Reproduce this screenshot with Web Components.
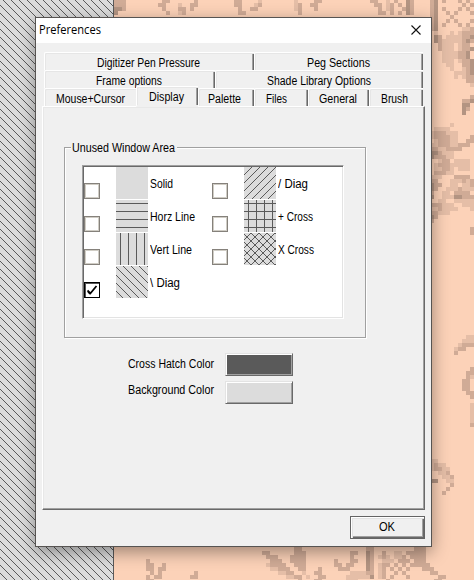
<!DOCTYPE html>
<html lang="en"><head><meta charset="utf-8"><title>Preferences</title>
<style>html,body{margin:0;width:474px;height:580px;overflow:hidden;background:#fcd2b8}body{font:12px/14px "Liberation Sans",Arial,sans-serif;color:#000}</style></head>
<body>
<paint-desktop>
<pref-window heading="Preferences">
<tab-stack>
<tab-row slot="tabs">
<tab-item style="width:210px" label="Digitizer Pen Pressure" w="103" lx="52"></tab-item><tab-item style="width:169px" label="Peg Sections" w="63" lx="52"></tab-item>
</tab-row>
<tab-row slot="tabs">
<tab-item style="width:171px" label="Frame options" w="66" lx="51"></tab-item><tab-item style="width:208px" label="Shade Library Options" w="104" lx="51"></tab-item>
</tab-row>
<tab-row slot="tabs">
<tab-item flat style="width:92px" label="Mouse+Cursor" w="69" lx="11"></tab-item><tab-item selected style="width:62px" label="Display" w="35" lx="12"></tab-item><tab-item style="width:56px" label="Palette" w="33" lx="9"></tab-item><tab-item style="width:54px" label="Files" w="21" lx="11"></tab-item><tab-item style="width:61px" label="General" w="38" lx="10"></tab-item><tab-item style="width:54px" label="Brush" w="27" lx="11"></tab-item>
</tab-row>
<group-box label="Unused Window Area" w="103">
<pattern-list>
<pattern-option kind="solid" label="Solid" w="23"></pattern-option>
<pattern-option kind="horz" label="Horz Line" w="45"></pattern-option>
<pattern-option kind="vert" label="Vert Line" w="42"></pattern-option>
<pattern-option kind="back" label="\ Diag" w="30" checked></pattern-option>
<pattern-option kind="slash" label="/ Diag" w="30"></pattern-option>
<pattern-option kind="plus" label="+ Cross" w="35"></pattern-option>
<pattern-option kind="cross" label="X Cross" w="36"></pattern-option>
</pattern-list>
</group-box>
<color-row first label="Cross Hatch Color" w="86" color="#5a5a5a"></color-row>
<color-row label="Background Color" w="86" color="#dcdcdc"></color-row>
</tab-stack>
<ok-button slot="footer"></ok-button>
</pref-window>
</paint-desktop>
<script>
const make=(name,html,init)=>customElements.define(name,class extends HTMLElement{
 connectedCallback(){ if(this.shadowRoot)return; const r=this.attachShadow({mode:'open'}); r.innerHTML=typeof html==='function'?html(this):html; if(init)init(this,r); }
});
const at=(e,n)=>e.getAttribute(n);
const fit=(e)=>`<fit-text text="${at(e,'label')}" w="${at(e,'w')}"></fit-text>`;

/* Single-line label squeezed to a set width */
make('fit-text',e=>`<style>:host{display:block;flex:none;height:14px;width:${at(e,'w')}px;white-space:nowrap}span{display:inline-block;transform-origin:0 0}</style><span>${at(e,'text')}</span>`,
 (e,r)=>{const s=r.querySelector('span');s.style.transform=`scaleX(${+at(e,'w')/s.getBoundingClientRect().width})`;});

/* 8x8 hatch tiles; p is the diagonal phase */
function tile(kind,p=7){
 let d='';
 for(let i=0;i<8;i++){
  if(kind==='horz'||kind==='plus')d+=`M${i} 3h1v1h-1z`;
  if(kind==='vert'||kind==='plus')d+=`M4 ${i}h1v1h-1z`;
  if(kind==='back'||kind==='cross')d+=`M${(i+p)%8} ${i}h1v1h-1z`;
  if(kind==='slash'||kind==='cross')d+=`M${(15-i+(kind==='cross'?-1:0))%8} ${i}h1v1h-1z`;
 }
 return `<svg width="100%" height="100%" shape-rendering="crispEdges"><defs><pattern id="t" width="8" height="8" patternUnits="userSpaceOnUse"><path fill="#5a5a5a" d="${d}"/></pattern></defs><rect width="100%" height="100%" fill="#dcdcdc"/><rect width="100%" height="100%" fill="url(#t)"/></svg>`;
}
make('hatch-fill',e=>`<style>:host{display:block;flex:none}svg{display:block}</style>${tile(at(e,'kind'),+(at(e,'phase')??7))}`);

/* Enlarged drawing: each character is one 4px pixel, a = light … d = darkest */
const art=[
[114,-1,["bbb","bbb","ccb","c"]],
[150,-1,["   bb      b","  bb   a  bb","   b   bb b","    b  ab"]],
[226,-1,["  bb    a","  bb   ab","   b  bb","   bb"]],
[294,-1,["a    bb","ab  bb","ab   b"," b"]],
[370,-1,["bb  a b  cb"," bb ab b cb","  b ab  bcb","  bb b b cb"]],
[426,-1,[
" bc b   b b "," bc      b b"," bc b   b b "," bc  b b   b"," bc   b     "," bc  b b   b"," bc b   b b ",
" bc      aab","  a   a abbb","  cb aaaabbc","  cbaaaaabcb","   baaa abb ","   baaa abbc","    aaaabbc ","    aaaabbc ","    aaa abbc","     aa  bbc","      a  abc","       aaabc","       a abb","          bb","           a",
"            ","            ","           b","         bbc","         cc ","         cb ","         c  ","            ","            ",
"      a     ","  aaaa      "," abbbaaa    "," abbbbaa   b","  abbbaa  bb"," aabbbaabbb "," bbaabbbb   "," ccbaaa     "," cbbbaa     ","   abb aaaa ","  abbbaaaaa ","  aabba aaa ","  bbbaa     "," aaa   bbbb "," bb   aaabab"," cbb  aa aab"," cb  aaabaaa"," b  aa bbbb "," c  aaaccbbb","   aa  aaaaa"," bbbaaa  aaa"," aabaaaa   a"," bbaaa      "," cb         "," b          ","            ","           b","           b"]],
[426,335,["          aa","         aaa","        abbb","       abb  ","       b    "]],
[426,367,["           b","          bb","          ba","         bb ","         bb ","         bb ","          bb","           b"]],
[458,403,["   a","   a","   a","   a","   a","   b"]],
[426,459,[" aa"," abaa"," abbaa","   aab","    aab"," cc  aa","      b","     b","    b"]],
[114,547,[
"                                             bb                bb          bbb",
"                                     bb      bbb           bb  cb  b  aa bbbbb",
"                                      bbb   bbbb           b   cb aba aab bbbb",
"        b                              bbb  bbbb       b   bb  cb  aaa bbb bbb",
"        bb  b                         abbbb  bbb       bb bb   cb abb b b bbbbb",
"        bb bb                          aabbb  bb   b    bbb    cb ab b b b   bbb",
"         b b        b                    aabb  a  bb       aaaabb ab  b b      bb",
"        b bb       bb                      aabb a  bb     aaaaaac ab b   b       bb",
"        bb                                    b   bb      aaa       b           bb"]]
];
const tone={a:'#e5bea7',b:'#d0ab96',c:'#b39482',d:'#8d766a'};
make('pixel-art',()=>{let o='';for(const[x,y,rows]of art)rows.forEach((s,j)=>[...s].forEach((c,i)=>{if(tone[c])o+=`<rect x="${x+i*4}" y="${y+j*4}" width="4" height="4" fill="${tone[c]}"/>`}));
 return `<style>:host{display:block}svg{display:block}</style><svg width="474" height="580" shape-rendering="crispEdges">${o}</svg>`;});

make('paint-desktop',`<style>:host{display:block;position:relative;width:474px;height:580px;overflow:hidden;background:#fcd2b8}
pixel-art{position:absolute;inset:0}hatch-fill{position:relative;width:113px;height:580px;border-right:1px solid #5a5a5a}</style><pixel-art></pixel-art><hatch-fill kind="back" phase="3"></hatch-fill><slot></slot>`);

make('pref-window',e=>`<style>:host{position:absolute;left:35px;top:17px;width:397px;height:530px;box-sizing:border-box;border:1px solid #575452;background:#f0f0f0;display:flex;flex-direction:column;box-shadow:0 5px 16px rgba(0,0,0,.38)}
header{height:25px;box-sizing:border-box;background:#fff;display:flex;align-items:center;justify-content:space-between;padding:0 9px 2px 3px;font:12px/14px "Open Sans","Noto Sans",sans-serif}
header svg{display:block}
footer{display:flex;justify-content:flex-end;padding:6px 6px 0 0}</style>
<header><fit-text text="${at(e,'heading')}" w="62"></fit-text><svg width="12" height="12"><path d="M1.5 1.5l9 9M10.5 1.5l-9 9" stroke="#111" stroke-width="1.1"/></svg></header><slot></slot><footer><slot name="footer"></slot></footer>`);

make('tab-stack',`<style>:host{display:block;padding:9px 6px 0}nav{padding-left:2px}
section{height:404px;box-sizing:border-box;border:1px solid;border-color:#fff #696969 #696969 #fff;box-shadow:inset -1px -1px #a0a0a0,inset 1px 1px #e8e8e8;padding:40px 0 0 21px;width:383px}</style><nav><slot name="tabs"></slot></nav><section><slot></slot></section>`);
make('tab-row',`<style>:host{display:flex;height:18px}</style><slot></slot>`);
make('tab-item',e=>`<style>:host{display:block;box-sizing:border-box;height:18px;padding:3px 0 0 ${at(e,'lx')}px;background:#f0f0f0;border-left:1px solid #fff;border-top:1px solid #fff;border-top-left-radius:2px;box-shadow:inset 1px 1px #e6e6e6,inset -1px 0 #696969,inset -2px 0 #a0a0a0}
:host([flat]){box-shadow:inset 1px 1px #e6e6e6}
:host([selected]){height:21px;margin-top:-2px;position:relative;border-bottom:2px solid #f0f0f0}</style>${fit(e)}`);

make('group-box',e=>`<style>:host{display:block;box-sizing:border-box;width:302px;height:191px;border:1px solid #a0a0a0;box-shadow:inset 1px 1px #fff,1px 1px #fff;padding:17px}
.l{position:absolute;left:35px;top:123px;padding:0 2px 0 1px;background:#f0f0f0}</style><div class="l">${fit(e)}</div><slot></slot>`);
make('pattern-list',`<style>:host{display:grid;box-sizing:border-box;width:262px;height:154px;background:#fff;border:1px solid;border-color:#a0a0a0 #fff #fff #a0a0a0;box-shadow:inset 1px 1px #696969,inset -1px -1px #e3e3e3;padding:1px;grid-template:repeat(4,33px)/128px 128px;grid-auto-flow:column}</style><slot></slot>`);
make('check-box',e=>`<style>:host{display:block;flex:none;box-sizing:border-box;width:16px;height:16px;border:1px solid #85817b;box-shadow:inset 0 0 0 1px #d0cdc5;background:#fff}
:host([checked]){border-color:#000;box-shadow:inset 1px 1px #555}svg{display:block}</style>${e.hasAttribute('checked')?'<svg width="14" height="14"><path d="M2.5 7.5l3 2.8 6-7.3M3 8.8l2.6 2.2" fill="none" stroke="#000" stroke-width="1.8"/></svg>':''}`);
make('pattern-option',e=>`<style>:host{display:flex;height:33px}check-box{margin-top:16px}hatch-fill{width:32px;height:32px;margin-left:16px}fit-text{margin:10px 0 0 2px}</style><check-box ${e.hasAttribute('checked')?'checked':''}></check-box><hatch-fill kind="${at(e,'kind')}"></hatch-fill>${fit(e)}`);
make('color-row',e=>`<style>:host{display:flex;padding:4px 0 0 64px;height:24px}:host([first]){padding-top:15px}
fit-text{margin-top:2px}:host([first]) fit-text{margin-top:4px}i{display:block;box-sizing:border-box;margin-left:11px;width:68px;height:23px;background:${at(e,'color')};border:1px solid;border-color:#e3e3e3 #696969 #696969 #e3e3e3;box-shadow:inset 1px 1px #fff,inset -1px -1px #a0a0a0}</style>${fit(e)}<i></i>`);
make('ok-button',`<style>:host{display:flex;box-sizing:border-box;width:75px;height:23px;border:1px solid #646464;background:#f0f0f0;box-shadow:inset 1px 1px #fff,inset 2px 2px #e3e3e3,inset -1px -1px #696969,inset -2px -2px #a0a0a0;justify-content:center;padding:3px 1px 0 0}</style><fit-text text="OK" w="16"></fit-text>`);
</script>
</body></html>
